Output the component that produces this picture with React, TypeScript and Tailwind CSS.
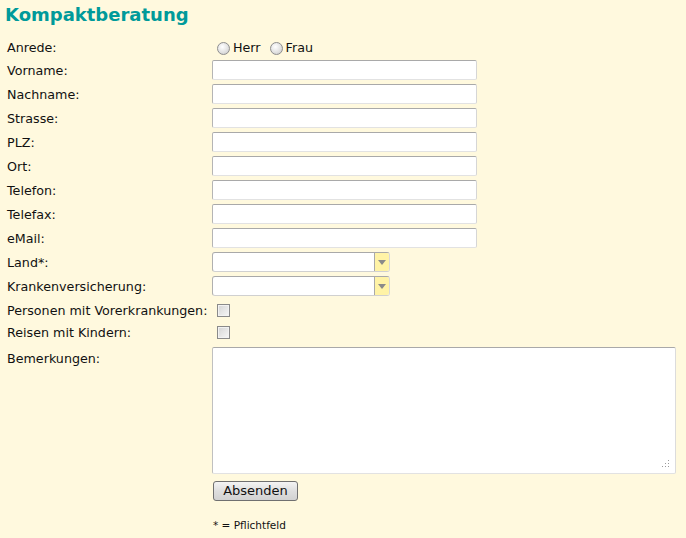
const textFields = [
  "Vorname:",
  "Nachname:",
  "Strasse:",
  "PLZ:",
  "Ort:",
  "Telefon:",
  "Telefax:",
  "eMail:",
];

const inputClasses =
  "block h-[20px] w-[265px] rounded-[2px] border border-t-[#a9a9a9] border-l-[#b5b5b5] border-r-[#d6d6d6] border-b-[#e2e2e2] bg-white";

const labelClasses = "h-[20px] pt-[3px]";

const Radio = ({ label }: { label: string }) => (
  <label className="flex items-center">
    <span className="mr-[3px] inline-block h-[13px] w-[13px] rounded-full border border-[#8e8e8e] bg-[radial-gradient(circle_at_40%_35%,#ffffff,#e2e2e2_55%,#c4c4c4)]" />
    <span>{label}</span>
  </label>
);

const Checkbox = () => (
  <span className="ml-[5px] inline-block h-[13px] w-[13px] border border-[#8a8a8a] bg-[linear-gradient(135deg,#d4d4d4,#f7f7f7)] shadow-[inset_0_0_0_1px_#f2f2f2]" />
);

const Select = () => (
  <div className="flex h-[20px] w-[178px] overflow-hidden rounded-[3px] border border-t-[#a9a9a9] border-l-[#b0b0b0] border-r-[#d8d8d8] border-b-[#d0d0d0] bg-white">
    <div className="flex-1" />
    <div className="flex w-[15px] items-center justify-center border-l border-[#a9a9a9] bg-[#fff3a6]">
      <svg width="8" height="5" viewBox="0 0 8 5">
        <path d="M0 0h8L4 5z" fill="#8a8a8a" />
      </svg>
    </div>
  </div>
);

// dotted resize grip in the corner of the textarea
const Grip = () => (
  <svg className="absolute right-[6px] bottom-[6px]" width="8" height="8" viewBox="0 0 8 8">
    <rect x="6" y="0" width="1" height="1" fill="#9a9a9a" />
    <rect x="3" y="3" width="1" height="1" fill="#9a9a9a" />
    <rect x="6" y="3" width="1" height="1" fill="#9a9a9a" />
    <rect x="0" y="6" width="1" height="1" fill="#9a9a9a" />
    <rect x="3" y="6" width="1" height="1" fill="#9a9a9a" />
    <rect x="6" y="6" width="1" height="1" fill="#9a9a9a" />
  </svg>
);

export default function App() {
  return (
    <div className="min-h-screen bg-[#fff9de] font-['DejaVu_Sans',Verdana,sans-serif] text-[12.7px] leading-[16px] text-[#111]">
      <h1 className="h-[37px] pl-[5px] pt-[2px] text-[18px] font-bold leading-[26px] text-[#009a9a]">
        Kompaktberatung
      </h1>
      <form className="grid grid-cols-[212px_1fr] gap-y-[4px] pl-[7px]">
        <div className="h-[19px] pt-[3px]">Anrede:</div>
        <div className="-ml-[7px] flex h-[19px] items-end gap-[9px] pl-[5px]">
          <Radio label="Herr" />
          <Radio label="Frau" />
        </div>

        {textFields.map((name) => (
          <div key={name} className="contents">
            <div className={labelClasses}>{name}</div>
            <div className="-ml-[7px]">
              <input className={inputClasses} />
            </div>
          </div>
        ))}

        <div className={labelClasses}>Land*:</div>
        <div className="-ml-[7px]">
          <Select />
        </div>
        <div className={labelClasses}>Krankenversicherung:</div>
        <div className="-ml-[7px]">
          <Select />
        </div>

        <div className={labelClasses}>Personen mit Vorerkrankungen:</div>
        <div className="-ml-[7px] flex h-[20px] items-center">
          <Checkbox />
        </div>
        <div className="-mt-[2px] h-[20px] pt-[3px]">Reisen mit Kindern:</div>
        <div className="-ml-[7px] -mt-[2px] flex h-[20px] items-center">
          <Checkbox />
        </div>

        <div className="pt-[5px]">Bemerkungen:</div>
        <div className="-ml-[7px] pr-[10px] pt-[1px]">
          <div className="relative">
            <textarea className="block h-[127px] w-full resize-none rounded-[2px] border border-t-[#a9a9a9] border-l-[#c0c0c0] border-r-[#dcdcdc] border-b-[#e2e2e2] bg-white" />
            <Grip />
          </div>
          <button
            type="button"
            className="mt-[7px] ml-[1px] h-[20px] w-[85px] rounded-[3px] border border-[#707070] bg-[linear-gradient(#f4f4f4,#dedede_50%,#d2d2d2)] text-[13px] leading-[16px] text-[#111]"
          >
            Absenden
          </button>
          <p className="mt-[18px] ml-[1px] text-[10.5px] leading-[12px]">* = Pflichtfeld</p>
        </div>
      </form>
    </div>
  );
}
